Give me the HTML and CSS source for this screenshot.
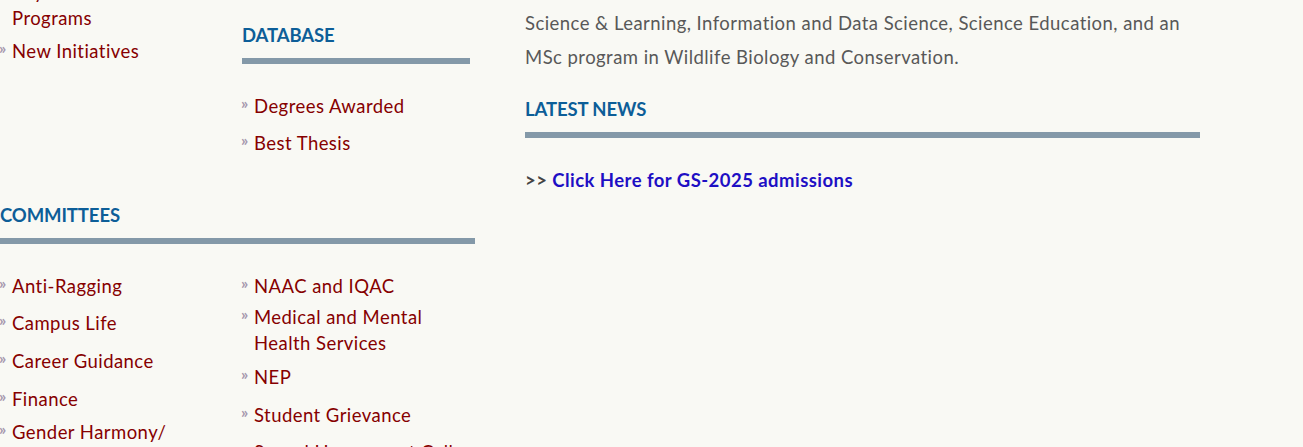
FILE: index.html
```html
<!DOCTYPE html>
<html lang="en">
<head>
    <meta charset="UTF-8">
    <meta name="viewport" content="width=device-width, initial-scale=1.0">
    <title>Graduate Studies</title>
    <link rel="stylesheet" href="styles.css">
</head>
<body>
    <div class="page">

        <!-- Left side: quick links -->
        <div class="sidebar">
            <div class="side-top">
                <ul class="link-list first-list">
                    <li class="gap-7">Key<br>Programs</li>
                    <li>New Initiatives</li>
                </ul>

                <div class="block">
                    <h2 class="section-title">DATABASE</h2>
                    <ul class="link-list">
                        <li>Degrees Awarded</li>
                        <li>Best Thesis</li>
                    </ul>
                </div>
            </div>

            <div class="block committees">
                <h2 class="section-title">COMMITTEES</h2>
                <div class="two-col">
                    <ul class="link-list">
                        <li class="gap-11">Anti-Ragging</li>
                        <li class="gap-12">Campus Life</li>
                        <li class="gap-12">Career Guidance</li>
                        <li class="gap-7">Finance</li>
                        <li>Gender Harmony/ Sensitization</li>
                    </ul>
                    <ul class="link-list">
                        <li class="gap-5">NAAC and IQAC</li>
                        <li class="gap-8">Medical and Mental Health Services</li>
                        <li class="gap-12">NEP</li>
                        <li class="gap-11">Student Grievance</li>
                        <li>Sexual Harassment Cell</li>
                    </ul>
                </div>
            </div>
        </div>

        <!-- Right side: intro and news -->
        <div class="main">
            <p class="intro">
                The School offers PhD programs in Biology, Physics, Ecology, Cognitive<br>
                Science &amp; Learning, Information and Data Science, Science Education, and an<br>
                MSc program in Wildlife Biology and Conservation.
            </p>

            <h2 class="section-title">LATEST NEWS</h2>
            <p class="news">&gt;&gt; <a href="#">Click Here for GS-2025 admissions</a></p>
        </div>

    </div>
</body>
</html>
```

FILE: styles.css
```css
html {
    background: #f9f9f4;
}
body {
    margin: 0;
    font-family: Lato, "Open Sans", Arial, sans-serif;
    font-size: 18.5px;
    letter-spacing: 0.45px;
    overflow: hidden;
}
.page {
    display: flex;
    margin-top: -28px;
}
.sidebar {
    width: 475px;
    flex-shrink: 0;
}
.side-top {
    display: grid;
    grid-template-columns: 242px 233px;
}
.main {
    width: 675px;
    margin-left: 50px;
}
.section-title {
    margin: 0;
    padding-bottom: 11px;
    border-bottom: 6px solid #8499a8;
    font-size: 18.5px;
    line-height: 24px;
    font-weight: bold;
    letter-spacing: -0.1px;
    color: #0d5e98;
}
.block .section-title {
    margin-top: 51px;
}
.side-top .block {
    padding-right: 5px;
}
.committees .section-title {
    margin-top: 47px;
}
.two-col {
    display: grid;
    grid-template-columns: 242px 233px;
}
.link-list {
    list-style: none;
    margin: 29px 0 0;
    padding: 0;
}
.first-list {
    margin-top: 7px;
}
.link-list li {
    position: relative;
    padding-left: 12px;
    margin-bottom: 11px;
    line-height: 26px;
    color: #860000;
}
.link-list li::before {
    content: "\00bb";
    position: absolute;
    left: -1px;
    top: -3px;
    font-size: 16px;
    font-weight: bold;
    letter-spacing: 0;
    color: #a597ad;
}
.link-list li:last-child {
    margin-bottom: 0;
}
.link-list li.gap-5 { margin-bottom: 5px; }
.link-list li.gap-7 { margin-bottom: 7px; }
.link-list li.gap-8 { margin-bottom: 8px; }
.link-list li.gap-11 { margin-bottom: 11px; }
.link-list li.gap-12 { margin-bottom: 12px; }
.intro {
    margin: 0;
    line-height: 34px;
    color: #585858;
}
.main .section-title {
    margin-top: 23px;
}
.news {
    margin: 29px 0 0;
    line-height: 26px;
    font-weight: bold;
    color: #444;
}
.news a {
    color: #1e0fc4;
    text-decoration: none;
}
```
